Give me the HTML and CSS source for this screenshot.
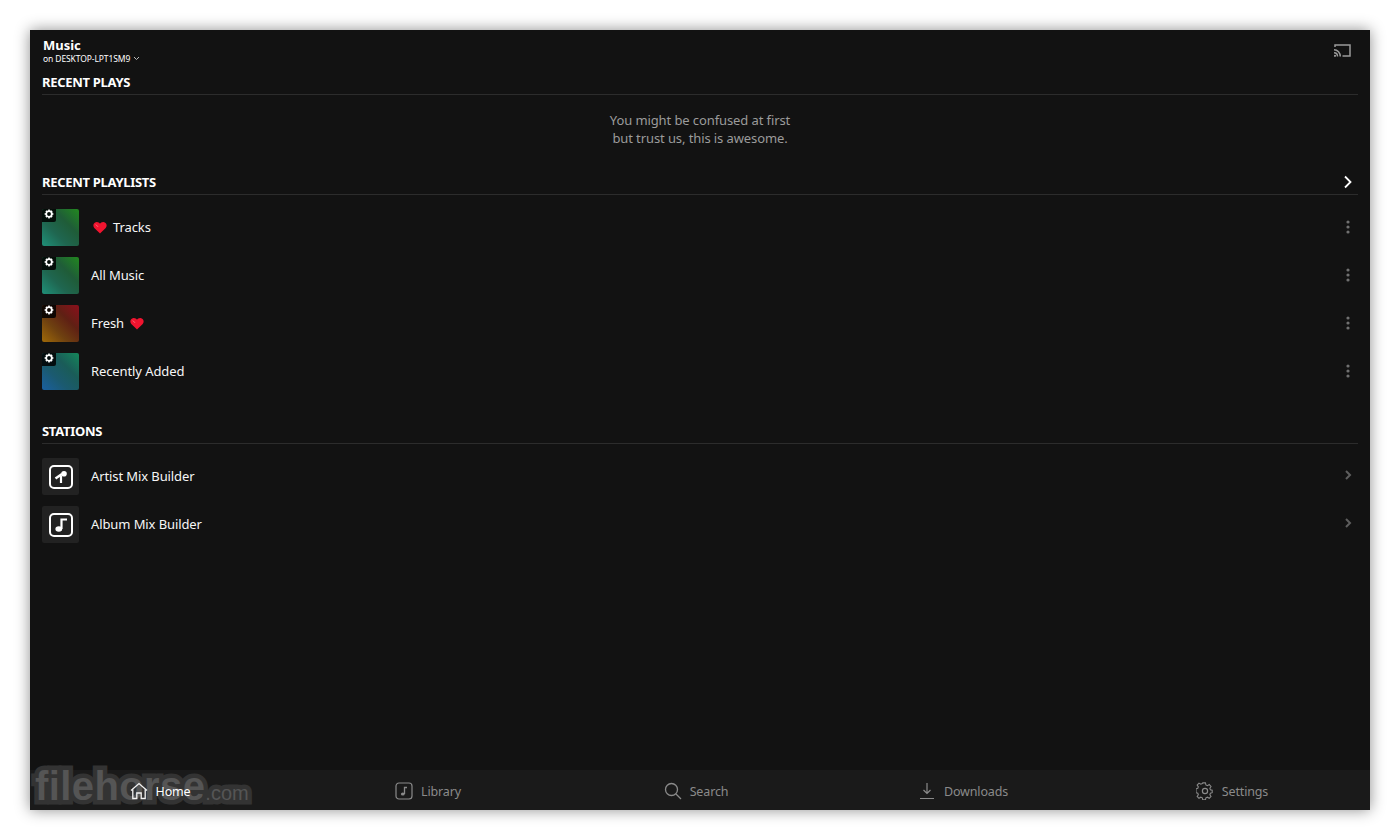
FILE: index.html
```html
<!DOCTYPE html>
<html lang="en">
<head>
    <meta charset="UTF-8">
    <title>Music</title>
    <link rel="stylesheet" href="styles.css">
</head>
<body>
    <div class="app">
        <header class="topbar">
            <div>
                <div class="app-title">Music</div>
                <div class="app-server">on DESKTOP-LPT1SM9
                    <svg class="caret" width="7" height="5" viewBox="0 0 7 5"><path d="M1 1l2.500 2.500L6 1" fill="none" stroke="#bbb" stroke-width="1"/></svg>
                </div>
            </div>
            <svg class="cast" width="17" height="13" viewBox="0 0 17 13" fill="none" stroke="#9a9a9a" stroke-width="1.500">
                <path d="M1 3V1h15v11H8.500"/>
                <path d="M0 5.800c3.600 0 6.300 2.900 6.300 6.700M0 8.800c2 0 3.500 1.600 3.500 3.700"/>
                <circle cx="1" cy="11.800" r="1.100" fill="#9a9a9a" stroke="none"/>
            </svg>
        </header>

        <main class="content">
            <section class="section section-plays">
                <h2 class="section-head">RECENT PLAYS</h2>
                <p class="empty-msg">You might be confused at first<br>but trust us, this is awesome.</p>
            </section>

            <section class="section section-playlists">
                <h2 class="section-head">RECENT PLAYLISTS
                    <svg width="10" height="14" viewBox="0 0 10 14"><path d="M2 1.500L7.500 7 2 12.500" fill="none" stroke="#fff" stroke-width="1.800"/></svg>
                </h2>
                <div class="rows">
                    <div class="row">
                        <div class="thumb thumb-green"><span class="badge"><svg width="10" height="10" viewBox="0 0 10 10"><use href="#gear"/></svg></span></div>
                        <svg class="heart heart-first" width="14" height="13" viewBox="0 0 14 13"><use href="#heart"/></svg>
                        <span class="row-name">Tracks</span>
                        <svg class="dots" width="4" height="14" viewBox="0 0 4 14"><use href="#dots"/></svg>
                    </div>
                    <div class="row">
                        <div class="thumb thumb-green"><span class="badge"><svg width="10" height="10" viewBox="0 0 10 10"><use href="#gear"/></svg></span></div>
                        <span class="row-name">All Music</span>
                        <svg class="dots" width="4" height="14" viewBox="0 0 4 14"><use href="#dots"/></svg>
                    </div>
                    <div class="row">
                        <div class="thumb thumb-red"><span class="badge"><svg width="10" height="10" viewBox="0 0 10 10"><use href="#gear"/></svg></span></div>
                        <span class="row-name">Fresh</span>
                        <svg class="heart heart-last" width="14" height="13" viewBox="0 0 14 13"><use href="#heart"/></svg>
                        <svg class="dots" width="4" height="14" viewBox="0 0 4 14"><use href="#dots"/></svg>
                    </div>
                    <div class="row">
                        <div class="thumb thumb-blue"><span class="badge"><svg width="10" height="10" viewBox="0 0 10 10"><use href="#gear"/></svg></span></div>
                        <span class="row-name">Recently Added</span>
                        <svg class="dots" width="4" height="14" viewBox="0 0 4 14"><use href="#dots"/></svg>
                    </div>
                </div>
            </section>

            <section class="section">
                <h2 class="section-head">STATIONS</h2>
                <div class="rows">
                    <div class="row">
                        <div class="thumb thumb-plain">
                            <svg width="24" height="24" viewBox="0 0 24 24" fill="none" stroke="#fff">
                                <rect x="1" y="1" width="22" height="22" rx="4" stroke-width="2"/>
                                <path d="M6.500 13.500l6.500-4.500" stroke-width="2.600"/>
                                <path d="M12 11v7" stroke-width="2.200"/>
                                <circle cx="15" cy="8.800" r="2.800" fill="#fff" stroke="none"/>
                            </svg>
                        </div>
                        <span class="row-name">Artist Mix Builder</span>
                        <svg class="chev" width="7" height="10" viewBox="0 0 7 10"><use href="#chev"/></svg>
                    </div>
                    <div class="row">
                        <div class="thumb thumb-plain">
                            <svg width="24" height="24" viewBox="0 0 24 24" fill="none" stroke="#fff">
                                <rect x="1" y="1" width="22" height="22" rx="4" stroke-width="2"/>
                                <path d="M12.500 16V6.500h5.500" stroke-width="2.200"/>
                                <ellipse cx="9.800" cy="16" rx="3.400" ry="2.800" fill="#fff" stroke="none"/>
                            </svg>
                        </div>
                        <span class="row-name">Album Mix Builder</span>
                        <svg class="chev" width="7" height="10" viewBox="0 0 7 10"><use href="#chev"/></svg>
                    </div>
                </div>
            </section>
        </main>

        <div class="watermark">filehorse<span class="watermark-com">.com</span></div>

        <nav class="tabs">
            <div class="tab tab-active">
                <svg width="18" height="18" viewBox="0 0 18 18" fill="none" stroke="#f2f2f2" stroke-width="1.300"><path d="M1 8.500L9 1.500l8 7M2.800 7.500v9h4V11h4.400v5.500h4v-9"/></svg>
                <span>Home</span>
            </div>
            <div class="tab">
                <svg width="18" height="18" viewBox="0 0 18 18" fill="none" stroke="#8a8a8a" stroke-width="1.200"><rect x="1" y="1" width="16" height="16" rx="3"/><path d="M9.500 12V5.500h2.500" stroke-width="1.300"/><ellipse cx="7.800" cy="12" rx="1.900" ry="1.500" fill="#8a8a8a" stroke="none"/></svg>
                <span>Library</span>
            </div>
            <div class="tab">
                <svg width="18" height="18" viewBox="0 0 18 18" fill="none" stroke="#8a8a8a" stroke-width="1.300"><circle cx="7.500" cy="7.500" r="6"/><path d="M12 12l5 5"/></svg>
                <span>Search</span>
            </div>
            <div class="tab">
                <svg class="tab-icon-wide" width="14" height="18" viewBox="0 0 14 18" fill="none" stroke="#8a8a8a" stroke-width="1.200"><path d="M7 1v10M3.500 8L7 11.500 10.500 8M0 16.500h14"/></svg>
                <span>Downloads</span>
            </div>
            <div class="tab">
                <svg width="18" height="18" viewBox="0 0 18 18" fill="none" stroke="#8a8a8a" stroke-width="1.200"><path d="M7.500 1h3l.5 2.300 1.700.8 2-1.300 2 2.200-1.300 2 .6 1.600 2 .5v2.800l-2 .6-.6 1.600 1.300 2-2 2-2-1.200-1.700.7-.5 2.200h-3l-.5-2.200-1.700-.7-2 1.200-2-2 1.300-2-.6-1.600-2-.6V7.500l2-.5.6-1.600-1.300-2 2-2.200 2 1.300 1.700-.8z" transform="scale(.9)"/><circle cx="9" cy="9" r="2.600"/></svg>
                <span>Settings</span>
            </div>
        </nav>
    </div>

    <!-- shared icons -->
    <svg class="defs" width="0" height="0">
        <defs>
            <g id="gear"><circle cx="5" cy="5" r="2.800" fill="none" stroke="#fff" stroke-width="1.700"/><path d="M5 .6v1.600M5 7.800v1.600M.6 5h1.600M7.800 5h1.600M1.900 1.900L3 3M7 7l1.100 1.100M8.100 1.900L7 3M3 7L1.900 8.100" stroke="#fff" stroke-width="1.500"/></g>
            <g id="heart"><path d="M7 12.500L1.300 7C-.5 5 .3 1.500 3.500 1 5 .8 6.300 1.600 7 2.800 7.700 1.600 9 .8 10.500 1c3.200.5 4 4 2.200 6z" fill="#f0142f"/><path d="M2.800 3.500L5 5.800" stroke="#ff6b78" stroke-width="1"/></g>
            <g id="dots"><circle cx="2" cy="2" r="1.600" fill="#707070"/><circle cx="2" cy="7" r="1.600" fill="#707070"/><circle cx="2" cy="12" r="1.600" fill="#707070"/></g>
            <g id="chev"><path d="M1 1l4 4-4 4" fill="none" stroke="#5e5e5e" stroke-width="2"/></g>
        </defs>
    </svg>
</body>
</html>
```

FILE: styles.css
```css
html, body {
    height: 100%;
}
body {
    margin: 0;
    padding: 30px;
    box-sizing: border-box;
    background-color: #fff;
    font-family: "Noto Sans", "Open Sans", sans-serif;
    color: #fff;
}
.app {
    position: relative;
    display: flex;
    flex-direction: column;
    height: 780px;
    background-color: #121212;
    box-shadow: 0 0 14px rgba(0, 0, 0, 0.45);
    overflow: hidden;
}
.topbar {
    display: flex;
    justify-content: space-between;
    padding: 8px 19px 0 13px;
    height: 34px;
    box-sizing: border-box;
}
.app-title {
    font-size: 13px;
    font-weight: 700;
    line-height: 15px;
}
.app-server {
    font-size: 8.500px;
    line-height: 11px;
    letter-spacing: -0.1px;
}
.caret {
    margin-left: 1px;
    vertical-align: 1px;
}
.cast {
    margin-top: 6px;
}
.content {
    flex: 1;
    padding: 0 12px;
}
.section-head {
    display: flex;
    justify-content: space-between;
    align-items: center;
    margin: 0;
    height: 24px;
    padding-top: 6px;
    font-size: 13px;
    font-weight: 700;
    line-height: 24px;
    letter-spacing: -0.3px;
    border-bottom: 1px solid #2c2c2c;
}
.section-head svg {
    margin-right: 5px;
}
.section-plays {
    height: 100px;
}
.section-playlists {
    height: 249px;
}
.empty-msg {
    margin: 16px 0 0;
    font-size: 13px;
    line-height: 18px;
    text-align: center;
    color: #9b9b9b;
    letter-spacing: -0.1px;
}
.rows {
    padding-top: 14px;
}
.row {
    display: flex;
    align-items: center;
    height: 37px;
    margin-bottom: 11px;
}
.row-name {
    margin-bottom: 2px;
    font-size: 13px;
    letter-spacing: -0.1px;
    color: #f6f6f6;
}
.thumb {
    position: relative;
    flex: none;
    width: 37px;
    height: 37px;
    margin-right: 12px;
    border-radius: 2px;
    overflow: hidden;
}
.thumb-green {
    background: linear-gradient(to top right, #1f9079, #1f6650 35%, #1f5c38 65%, #22881f);
}
.thumb-red {
    background: linear-gradient(to top right, #a06a08, #6e4010 35%, #5f2014 65%, #8c0f1c);
}
.thumb-blue {
    background: linear-gradient(to top right, #1a5fa0, #1b5a70 35%, #1a5c58 65%, #15875a);
}
.thumb-plain {
    display: flex;
    align-items: center;
    justify-content: center;
    background-color: #222;
}
.badge {
    position: absolute;
    top: 0;
    left: 0;
    display: flex;
    align-items: flex-start;
    justify-content: center;
    width: 14px;
    height: 13px;
    background-color: rgba(0, 0, 0, 0.85);
    border-bottom-right-radius: 2px;
}
.heart-first {
    margin: 0 6px 0 2px;
}
.heart-last {
    margin-left: 6px;
}
.dots,
.chev {
    margin-left: auto;
    margin-right: 8px;
}
.dots {
    margin-bottom: 1px;
}
.chev {
    margin-right: 6px;
    margin-bottom: 3px;
}
.tabs {
    position: relative;
    display: flex;
    flex: none;
    height: 40px;
    background-color: #1a1a1a;
}
.tab {
    flex: 1;
    display: flex;
    align-items: center;
    justify-content: center;
    gap: 8px;
    padding: 2px 8px 0 0;
    box-sizing: border-box;
    font-size: 12.500px;
    letter-spacing: -0.15px;
    color: #8a8a8a;
}
.tab-active {
    position: relative;
    z-index: 2;
    color: #fff;
}
.tab-icon-wide {
    margin-right: 2px;
}
.watermark {
    position: absolute;
    z-index: 1;
    left: 5px;
    bottom: -3px;
    font-family: "Liberation Sans", sans-serif;
    font-size: 40px;
    font-weight: 700;
    line-height: 40px;
    letter-spacing: 0.4px;
    white-space: nowrap;
    color: #555;
    -webkit-text-stroke: 9px #333;
    paint-order: stroke fill;
    pointer-events: none;
}
.watermark-com {
    font-size: 20px;
    font-weight: 400;
    letter-spacing: 0;
}
.defs {
    position: absolute;
}
```
